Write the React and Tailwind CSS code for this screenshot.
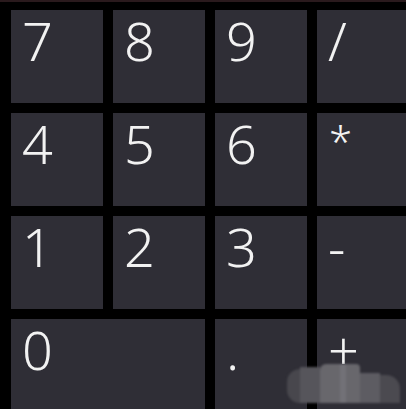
import React from 'react';

const keys = [
    { label: '7' }, { label: '8' }, { label: '9' }, { label: '/' },
    { label: '4' }, { label: '5' }, { label: '6' }, { label: '*', small: true },
    { label: '1' }, { label: '2' }, { label: '3' }, { label: '-' },
    { label: '0', wide: true }, { label: '.' }, { label: '+' },
];

const Key = ({ label, wide, small }) => (
    <button
        className={`${wide ? 'col-span-2' : ''} ${small ? 'text-[42px] pt-[7px] pl-[12px]' : 'text-[54px] pt-[3px] pl-[11px]'} bg-[#2f2e36] text-[#f2f2f2] font-light flex items-start leading-none`}
        style={{ fontFamily: '"Noto Sans", "Open Sans", sans-serif' }}
    >
        {label}
    </button>
);

const App = () => {
    return (
        <div className="relative w-[406px] h-[409px] overflow-hidden bg-black border-t-2 border-[#2a1a1d]">
            <div className="grid grid-cols-[repeat(4,92px)] grid-rows-[repeat(4,93px)] gap-[10px] pl-[11px] pt-[8px]">
                {keys.map(k => <Key key={k.label} {...k} />)}
            </div>

            {/* blurred watermark in the corner */}
            <div className="absolute left-[287px] top-[362px] h-[39px] flex items-end blur-[1px]">
                <div className="w-[13px] h-[34px] rounded-l-[17px] bg-[#48474d]" />
                <div className="w-[20px] h-[36px] bg-[#56555b]" />
                <div className="w-[20px] h-[39px] rounded-tl-[6px] bg-[#68676c]" />
                <div className="w-[6px] h-[39px] bg-[#727177]" />
                <div className="w-[14px] h-[39px] rounded-tr-[4px] bg-[#68676c]" />
                <div className="w-[20px] h-[30px] bg-[#5d5c62]" />
                <div className="w-[20px] h-[28px] rounded-tr-[14px] bg-[#4b4a50]" />
            </div>
        </div>
    );
};

export default App;
